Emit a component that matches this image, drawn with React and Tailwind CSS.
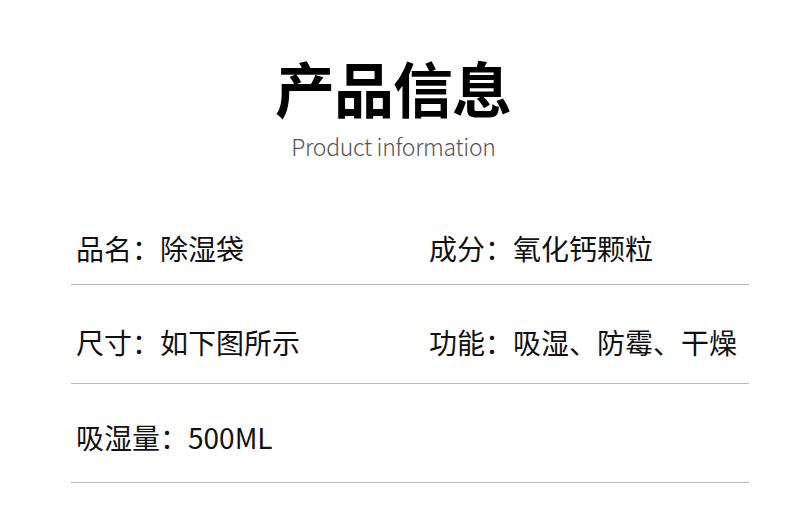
import React from 'react';

const rows = [
    [
        { label: '品名：', value: '除湿袋' },
        { label: '成分：', value: '氧化钙颗粒' },
    ],
    [
        { label: '尺寸：', value: '如下图所示' },
        { label: '功能：', value: '吸湿、防霉、干燥' },
    ],
    [
        { label: '吸湿量：', value: '500ML' },
    ],
];

export default function App() {
    return (
        <div className="w-[790px] h-[509px] bg-white overflow-hidden font-['Noto_Sans_CJK_SC','Noto_Sans',sans-serif] text-[#111]">
            {/* Header */}
            <div className="pt-[57px] flex flex-col items-center">
                <h1 className="text-[60px] leading-[60px] font-bold text-black tracking-[-1px] pr-[4px]">产品信息</h1>
                <p className="mt-[14px] text-[23px] leading-[30px] font-light text-[#555] tracking-[-0.3px] pr-[3px]">Product information</p>
            </div>

            {/* Spec rows */}
            <div className="mt-[31px] ml-[71px] w-[678px]">
                {rows.map((row, i) => (
                    <div
                        key={i}
                        className={`grid grid-cols-[353px_1fr] border-b border-[#b8b8b8] pl-[5px] ${i === 0 ? 'pt-[41px] pb-[21px]' : i === 1 ? 'pt-[42px] pb-[26px]' : 'pt-[38px] pb-[30px]'}`}
                    >
                        {row.map((item) => (
                            <div key={item.label} className="text-[28px] leading-[30px] whitespace-nowrap">
                                <span>{item.label}</span>
                                <span>{item.value}</span>
                            </div>
                        ))}
                    </div>
                ))}
            </div>
        </div>
    );
}
